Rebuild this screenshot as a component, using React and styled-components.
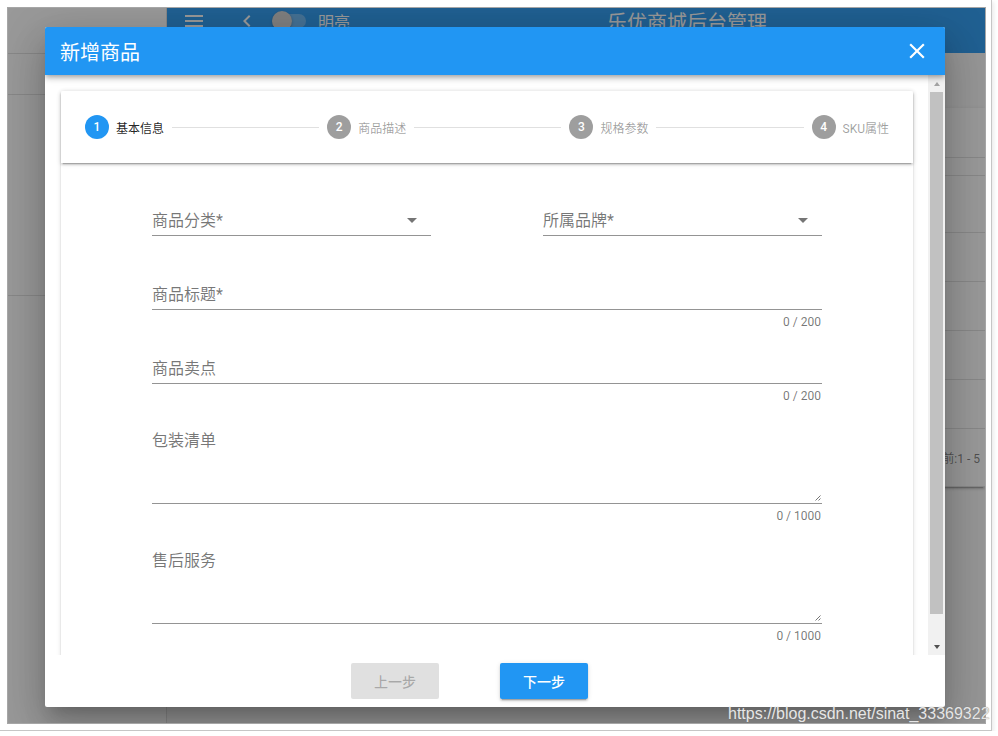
import React from 'react'
import styled, { createGlobalStyle } from 'styled-components'

const GlobalStyle = createGlobalStyle`
  html, body {
    margin: 0;
    padding: 0;
    background: #fff;
  }
  body {
    font-family: Roboto, "Noto Sans CJK SC", sans-serif;
  }
  * {
    box-sizing: border-box;
  }
`

const Page = styled.div`
  position: relative;
  width: 992px;
  height: 731px;
  padding: 7px 0 0 7px;
  border-right: 1px solid #c6c6c6;
  border-bottom: 1px solid #c6c6c6;
  box-shadow: 2px 2px 4px rgba(0, 0, 0, 0.08);
`

const Screen = styled.div`
  position: relative;
  width: 979px;
  height: 717px;
  border: 1px solid #a6a6a6;
  background: #fafafa;
  display: flex;
  overflow: hidden;
`

/* underlying admin page */

const Drawer = styled.div`
  width: 159px;
  flex-shrink: 0;
  background: #fff;
  border-right: 1px solid rgba(0, 0, 0, 0.12);
  display: flex;
  flex-direction: column;
`

const DrawerBlock = styled.div`
  height: ${(p) => p.h}px;
  border-bottom: 1px solid rgba(0, 0, 0, 0.12);
`

const Main = styled.div`
  flex: 1;
  display: flex;
  flex-direction: column;
`

const AppBar = styled.div`
  height: 45px;
  background: #2196f3;
  color: #fff;
  display: flex;
  align-items: center;
  padding: 0 0 19px 15px;
`

const BarIcon = styled.svg`
  width: 24px;
  height: 24px;
  fill: currentColor;
  margin-left: ${(p) => p.gap || 0}px;
`

const Switch = styled.div`
  position: relative;
  width: 34px;
  height: 14px;
  margin-left: 13px;
  border-radius: 8px;
  background: rgba(255, 255, 255, 0.3);
`

const SwitchThumb = styled.div`
  position: absolute;
  left: 0;
  top: -3px;
  width: 20px;
  height: 20px;
  border-radius: 50%;
  background: #d0d0d0;
  box-shadow: 0 1px 3px rgba(0, 0, 0, 0.3);
`

const ThemeText = styled.span`
  margin-left: 12px;
  font-size: 16px;
`

const AppTitle = styled.span`
  margin-left: 257px;
  font-size: 20px;
`

const MainContent = styled.div`
  flex: 1;
  padding: 55px 0 0 24px;
`

const TableCard = styled.div`
  background: #fff;
  box-shadow: 0 3px 1px -2px rgba(0, 0, 0, 0.2), 0 2px 2px 0 rgba(0, 0, 0, 0.14),
    0 1px 5px 0 rgba(0, 0, 0, 0.12);
`

const TableRow = styled.div`
  height: ${(p) => p.h}px;
  border-bottom: 1px solid rgba(0, 0, 0, 0.12);
  display: flex;
  align-items: center;
  justify-content: flex-end;
  padding-right: 5px;
  font-size: 12px;
  color: rgba(0, 0, 0, 0.54);
`

const Overlay = styled.div`
  position: absolute;
  inset: 0;
  background: rgba(33, 33, 33, 0.46);
`

/* dialog */

const Dialog = styled.div`
  position: absolute;
  left: 37px;
  top: 19px;
  width: 900px;
  height: 680px;
  background: #fff;
  border-radius: 2px;
  overflow: hidden;
  display: flex;
  flex-direction: column;
  box-shadow: 0 11px 15px -7px rgba(0, 0, 0, 0.2), 0 24px 38px 3px rgba(0, 0, 0, 0.14),
    0 9px 46px 8px rgba(0, 0, 0, 0.12);
`

const DialogBar = styled.div`
  position: relative;
  z-index: 1;
  height: 48px;
  flex-shrink: 0;
  padding: 0 15px;
  background: #2196f3;
  color: #fff;
  display: flex;
  align-items: center;
  justify-content: space-between;
  box-shadow: 0 2px 4px -1px rgba(0, 0, 0, 0.2), 0 4px 5px 0 rgba(0, 0, 0, 0.14),
    0 1px 10px 0 rgba(0, 0, 0, 0.12);
`

const DialogTitle = styled.div`
  font-size: 20px;
  font-weight: 400;
`

const CloseButton = styled.button`
  border: none;
  background: none;
  padding: 0;
  color: #fff;
  display: flex;
  cursor: pointer;

  svg {
    width: 26px;
    height: 26px;
    fill: currentColor;
  }
`

const DialogBody = styled.div`
  height: 580px;
  display: flex;
`

const ScrollArea = styled.div`
  flex: 1;
  overflow: hidden;
  padding: 16px 15px 0 16px;
`

const Scrollbar = styled.div`
  width: 17px;
  background: #f1f1f1;
  display: flex;
  flex-direction: column;
`

const ScrollButton = styled.div`
  height: 17px;
  display: flex;
  align-items: center;
  justify-content: center;
`

const ScrollArrow = styled.div`
  width: 0;
  height: 0;
  border-left: 3.5px solid transparent;
  border-right: 3.5px solid transparent;
  ${(p) =>
    p.up
      ? `border-bottom: 4px solid ${p.color};`
      : `border-top: 4px solid ${p.color};`}
`

const ScrollTrack = styled.div`
  flex: 1;
  padding: 0 2px;
`

const ScrollThumb = styled.div`
  height: 522px;
  background: #c1c1c1;
`

const Stepper = styled.div`
  height: 700px;
  background: #fff;
  border-radius: 2px;
  box-shadow: 0 3px 1px -2px rgba(0, 0, 0, 0.2), 0 2px 2px 0 rgba(0, 0, 0, 0.14),
    0 1px 5px 0 rgba(0, 0, 0, 0.12);
`

const StepperHeader = styled.div`
  position: relative;
  height: 72px;
  padding: 0 24px;
  display: flex;
  align-items: center;
  box-shadow: 0 3px 1px -2px rgba(0, 0, 0, 0.2), 0 2px 2px 0 rgba(0, 0, 0, 0.14),
    0 1px 5px 0 rgba(0, 0, 0, 0.12);
`

const Step = styled.div`
  display: flex;
  align-items: center;
  gap: 7px;
`

const StepCircle = styled.div`
  width: 24px;
  height: 24px;
  border-radius: 50%;
  background: ${(p) => (p.active ? '#2196f3' : 'rgba(0, 0, 0, 0.38)')};
  color: #fff;
  font-size: 12px;
  font-weight: 500;
  display: flex;
  align-items: center;
  justify-content: center;
`

const StepLabel = styled.div`
  font-size: 12px;
  color: ${(p) => (p.active ? 'rgba(0, 0, 0, 0.87)' : 'rgba(0, 0, 0, 0.38)')};
`

const StepDivider = styled.div`
  flex: 1;
  height: 1px;
  margin: 0 8px;
  background: rgba(0, 0, 0, 0.12);
`

const Form = styled.div`
  width: 670px;
  margin: 0 auto;
  padding-top: 43px;
  display: flex;
  flex-direction: column;
  gap: 22px;
`

const SelectRow = styled.div`
  display: flex;
  justify-content: space-between;

  & > * {
    width: 279px;
  }
`

const Field = styled.div`
  display: flex;
  flex-direction: column;
`

const InputSlot = styled.div`
  position: relative;
  height: ${(p) => (p.multi ? 76 : 30)}px;
  padding-top: ${(p) => (p.multi ? 3 : 0)}px;
  border-bottom: 1px solid rgba(0, 0, 0, 0.42);
  display: flex;
  align-items: ${(p) => (p.multi ? 'flex-start' : 'center')};
`

const FieldLabel = styled.div`
  flex: 1;
  font-size: 16px;
  line-height: 20px;
  color: rgba(0, 0, 0, 0.54);
`

const DropArrow = styled.div`
  width: 0;
  height: 0;
  margin-right: 14px;
  border-left: 5px solid transparent;
  border-right: 5px solid transparent;
  border-top: 5px solid rgba(0, 0, 0, 0.54);
`

const ResizeHandle = styled.svg`
  position: absolute;
  right: 1px;
  bottom: 2px;
  width: 6px;
  height: 6px;
`

const Details = styled.div`
  height: 22px;
  padding-top: 6px;
  padding-right: 1px;
  font-size: 12px;
  line-height: 12px;
  text-align: right;
  color: rgba(0, 0, 0, 0.54);
`

const DialogActions = styled.div`
  height: 52px;
  flex-shrink: 0;
  display: flex;
  gap: 61px;
  padding: 8px 0 0 306px;
`

const Button = styled.button`
  width: 88px;
  height: 36px;
  border: none;
  border-radius: 2px;
  font-family: inherit;
  font-size: 14px;
  font-weight: 500;
  background: ${(p) => (p.primary ? '#2196f3' : 'rgba(0, 0, 0, 0.12)')};
  color: ${(p) => (p.primary ? '#fff' : 'rgba(0, 0, 0, 0.26)')};
  box-shadow: ${(p) =>
    p.primary
      ? '0 3px 1px -2px rgba(0,0,0,.2), 0 2px 2px 0 rgba(0,0,0,.14), 0 1px 5px 0 rgba(0,0,0,.12)'
      : 'none'};
`

const Watermark = styled.div`
  position: absolute;
  left: 728px;
  top: 704px;
  font-family: "Liberation Sans", Arial, sans-serif;
  font-size: 16px;
  line-height: 20px;
  color: #e6e6e6;
  text-shadow: 0 0 1px #6a6a6a;
  white-space: nowrap;
`

const steps = ['基本信息', '商品描述', '规格参数', 'SKU属性']

function TextField({ label, counter, multi }) {
  return (
    <Field>
      <InputSlot multi={multi}>
        <FieldLabel>{label}</FieldLabel>
        {multi && (
          <ResizeHandle viewBox="0 0 6 6">
            <path d="M0.5 5.5L5.5 0.5M3.5 5.5L5.5 3.5" stroke="#777" strokeWidth="1" />
          </ResizeHandle>
        )}
      </InputSlot>
      <Details>{counter}</Details>
    </Field>
  )
}

function SelectField({ label }) {
  return (
    <Field>
      <InputSlot>
        <FieldLabel>{label}</FieldLabel>
        <DropArrow />
      </InputSlot>
      <Details />
    </Field>
  )
}

export default function App() {
  return (
    <>
      <GlobalStyle />
      <Page>
        <Screen>
          <Drawer>
            <DrawerBlock h={46} />
            <DrawerBlock h={41} />
            <DrawerBlock h={201} />
          </Drawer>
          <Main>
            <AppBar>
              <BarIcon viewBox="0 0 24 24">
                <path d="M3 18h18v-2H3v2zm0-5h18v-2H3v2zm0-7v2h18V6H3z" />
              </BarIcon>
              <BarIcon viewBox="0 0 24 24" gap={29}>
                <path d="M15.41 7.41L14 6l-6 6 6 6 1.41-1.41L10.83 12z" />
              </BarIcon>
              <Switch>
                <SwitchThumb />
              </Switch>
              <ThemeText>明亮</ThemeText>
              <AppTitle>乐优商城后台管理</AppTitle>
            </AppBar>
            <MainContent>
              <TableCard>
                <TableRow h={50} />
                <TableRow h={18} />
                <TableRow h={57} />
                <TableRow h={49} />
                <TableRow h={49} />
                <TableRow h={49} />
                <TableRow h={49} />
                <TableRow h={58}>当前:1 - 5</TableRow>
              </TableCard>
            </MainContent>
          </Main>

          <Overlay />

          <Dialog>
            <DialogBar>
              <DialogTitle>新增商品</DialogTitle>
              <CloseButton>
                <svg viewBox="0 0 24 24">
                  <path d="M19 6.41L17.59 5 12 10.59 6.41 5 5 6.41 10.59 12 5 17.59 6.41 19 12 13.41 17.59 19 19 17.59 13.41 12z" />
                </svg>
              </CloseButton>
            </DialogBar>

            <DialogBody>
              <ScrollArea>
                <Stepper>
                  <StepperHeader>
                    {steps.map((s, i) => (
                      <React.Fragment key={s}>
                        {i > 0 && <StepDivider />}
                        <Step>
                          <StepCircle active={i === 0}>{i + 1}</StepCircle>
                          <StepLabel active={i === 0}>{s}</StepLabel>
                        </Step>
                      </React.Fragment>
                    ))}
                  </StepperHeader>
                  <Form>
                    <SelectRow>
                      <SelectField label="商品分类*" />
                      <SelectField label="所属品牌*" />
                    </SelectRow>
                    <TextField label="商品标题*" counter="0 / 200" />
                    <TextField label="商品卖点" counter="0 / 200" />
                    <TextField label="包装清单" counter="0 / 1000" multi />
                    <TextField label="售后服务" counter="0 / 1000" multi />
                  </Form>
                </Stepper>
              </ScrollArea>
              <Scrollbar>
                <ScrollButton>
                  <ScrollArrow up color="#a3a3a3" />
                </ScrollButton>
                <ScrollTrack>
                  <ScrollThumb />
                </ScrollTrack>
                <ScrollButton>
                  <ScrollArrow color="#505050" />
                </ScrollButton>
              </Scrollbar>
            </DialogBody>

            <DialogActions>
              <Button disabled>上一步</Button>
              <Button primary>下一步</Button>
            </DialogActions>
          </Dialog>
        </Screen>
        <Watermark>https://blog.csdn.net/sinat_33369322</Watermark>
      </Page>
    </>
  )
}
